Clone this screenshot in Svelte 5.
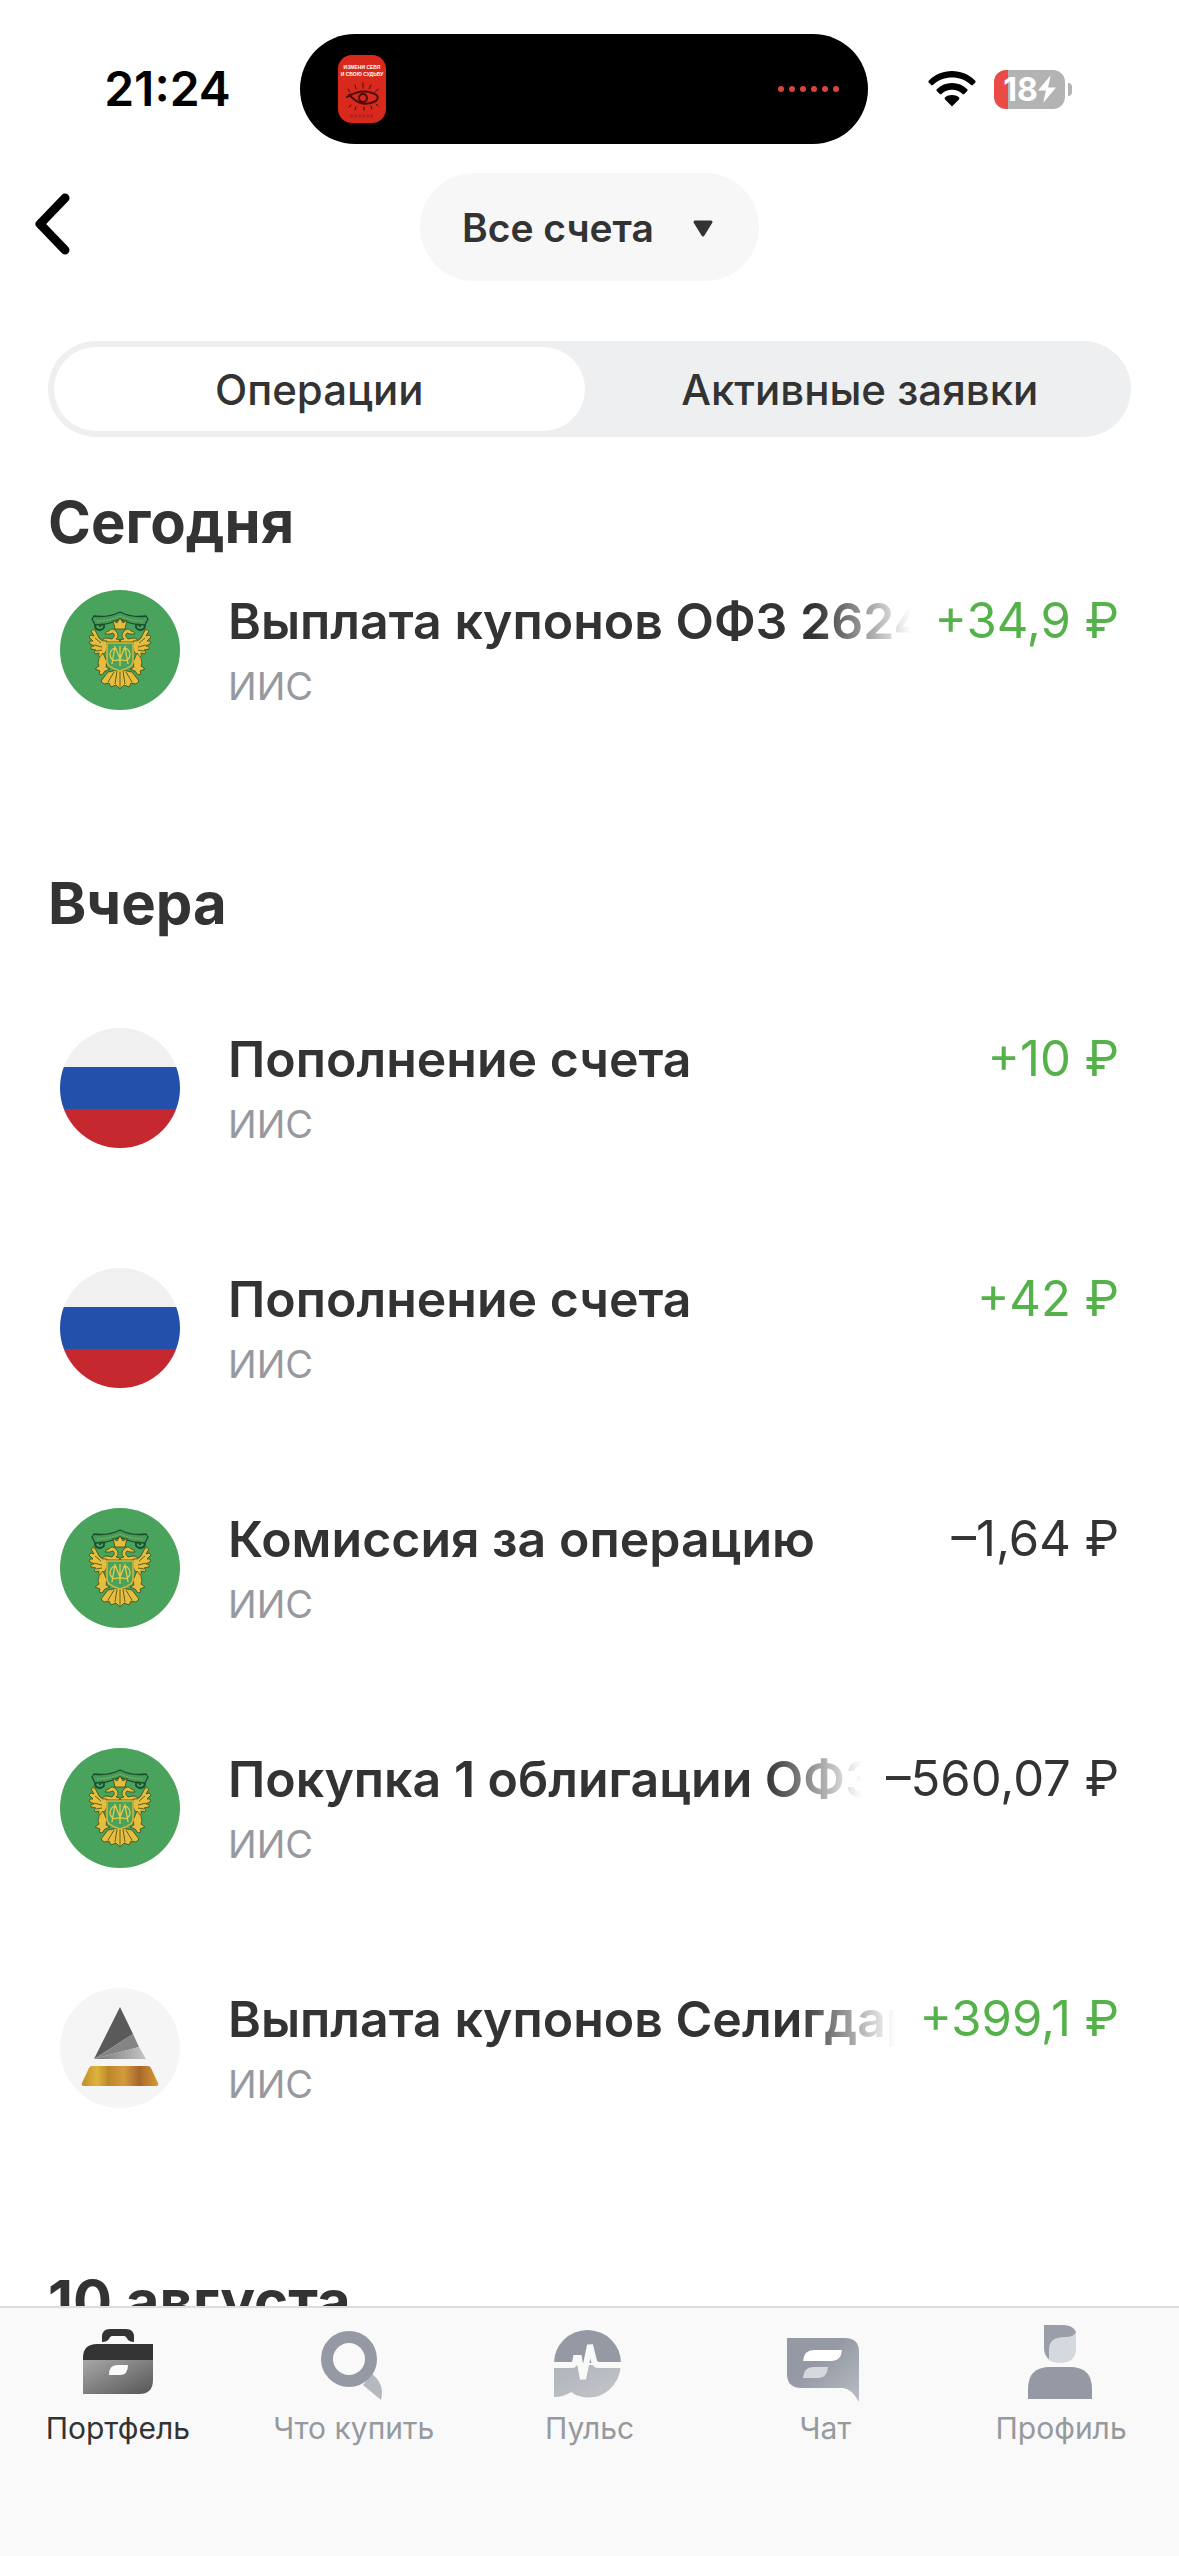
<script>
  let account = "Все счета";
  let tab = "operations";

  const tabs = [
    { id: "operations", name: "Операции" },
    { id: "orders", name: "Активные заявки" },
  ];

  const days = [
    {
      name: "Сегодня",
      items: [
        { icon: "ofz", title: "Выплата купонов ОФЗ 2624", sum: "+34,9 ₽", income: true },
      ],
    },
    {
      name: "Вчера",
      items: [
        { icon: "rub", title: "Пополнение счета", sum: "+10 ₽", income: true },
        { icon: "rub", title: "Пополнение счета", sum: "+42 ₽", income: true },
        { icon: "ofz", title: "Комиссия за операцию", sum: "–1,64 ₽" },
        { icon: "ofz", title: "Покупка 1 облигации ОФЗ", sum: "–560,07 ₽" },
        { icon: "seligdar", title: "Выплата купонов Селигдар", sum: "+399,1 ₽", income: true },
      ],
    },
    { name: "10 августа", items: [] },
  ];

  const menu = [
    { id: "portfolio", name: "Портфель" },
    { id: "search", name: "Что купить" },
    { id: "pulse", name: "Пульс" },
    { id: "chat", name: "Чат" },
    { id: "profile", name: "Профиль" },
  ];
</script>

<div class="screen">
  <div class="status">
    <div class="time">21:24</div>
    <div class="island">
      <svg width="48" height="68" viewBox="0 0 48 68">
        <rect width="48" height="68" rx="14" fill="#d9281c" />
        <text x="24" y="14" class="cover">ИЗМЕНИ СЕБЯ</text>
        <text x="24" y="21" class="cover">И СВОЮ СУДЬБУ</text>
        <g fill="none" stroke="#4a0d0b" stroke-width="2" stroke-linecap="round">
          <path d="M9 42 Q24 33 37 39 Q42 42 38 46 Q26 52 17 45 L11 40" />
          <circle cx="25" cy="43" r="4" />
          <path d="M10 34l2 3M17 30l1 4M25 28v5M33 30l-2 4M40 34l-3 3M13 50l-2 2M18 52l-1 3M26 52v3M33 51l1 3M38 49l2 2" stroke-width="1" />
        </g>
        <path d="M12 61h24" stroke="#b8211a" stroke-width="3" stroke-dasharray="3 1" />
      </svg>
      <div class="dots"><i></i><i></i><i></i><i></i><i></i><i></i></div>
    </div>
    <div class="signals">
      <svg width="48" height="36" viewBox="0 0 48 36">
        <path d="M24 0C33 0 41 3.500 47 9.500c.8.800.8 1.500 0 2.200l-2 2c-.7.700-1.500.7-2.200 0C37.500 9 31 6.500 24 6.500S10.500 9 5.200 13.700c-.7.700-1.500.7-2.200 0l-2-2c-.8-.7-.8-1.400 0-2.200C7 3.500 15 0 24 0z" />
        <path d="M24 12c6 0 11 2.300 15 6 .8.700.8 1.400 0 2.200l-2.500 2.500c-.7.700-1.500.7-2.200 0C31.500 20.200 28 18.800 24 18.800s-7.500 1.400-10.300 3.900c-.7.700-1.500.7-2.200 0L9 20.200c-.8-.8-.8-1.500 0-2.200 4-3.700 9-6 15-6z" />
        <path d="M24 24c2.800 0 5 .9 6.800 2.300.8.700.8 1.400.1 2.100L24 35.500l-6.900-7.100c-.7-.7-.7-1.400.1-2.100C19 24.900 21.200 24 24 24z" />
      </svg>
      <div class="battery">
        <span>18</span>
        <svg width="18" height="28" viewBox="0 0 17 26">
          <path d="M12 0 0 14.500h7.500L5 26 17 11.500H9.500z" fill="#fff" />
        </svg>
      </div>
    </div>
  </div>

  <header class="top">
    <button class="back" aria-label="Назад">
      <svg width="36" height="62" viewBox="0 0 36 62">
        <path d="M31 5 6 31l25 26" fill="none" stroke="#000" stroke-width="9" stroke-linecap="round" stroke-linejoin="round" />
      </svg>
    </button>
    <div class="account">
      <select bind:value={account} aria-label="Счет">
        <option>Все счета</option>
      </select>
      <svg width="22" height="18" viewBox="0 0 22 18">
        <path d="M3 2h16l-8 13z" fill="#333" stroke="#333" stroke-width="3" stroke-linejoin="round" />
      </svg>
    </div>
  </header>

  <div class="tabs" role="tablist">
    {#each tabs as t}
      <button
        role="tab"
        aria-selected={tab === t.id}
        class:active={tab === t.id}
        on:click={() => (tab = t.id)}>{t.name}</button
      >
    {/each}
  </div>

  <main>
    {#each days as day, i}
      <section>
        <h2 class:first={i === 0}>{day.name}</h2>
        <ul>
          {#each day.items as item}
            <li>
              <svg class="logo" width="120" height="120" viewBox="0 0 120 120">
                {#if item.icon === "ofz"}
                  <circle cx="60" cy="60" r="60" fill="#4aa35c" />
                  <g stroke="#3a4a1a" stroke-width=".8" stroke-linejoin="round">
                    <!-- ribbon -->
                    <path d="M34 26q14 2 26-4 12 6 26 4l2 3-3 6q-14 0-25-6-11 6-25 6l-3-6z" fill="#45995a" stroke="#174d2c" stroke-width="1.300" />
                    <path d="M35 35q0 5 5 5 5-1 4-5-4-2-4 2M85 35q0 5-5 5-5-1-4-5 4-2 4 2" fill="none" stroke="#174d2c" stroke-width="1.800" />
                    <path d="M37 31q12 0 23-5 11 5 23 5" fill="none" stroke="#9fbf55" stroke-dasharray="2 1" />
                    <g fill="#e6bd3c">
                      <!-- crown and heads -->
                      <path d="M55 39l-2-9 4 3 3-5 3 5 4-3-2 9z" />
                      <path d="M60 52H42q0-4 5-4l5 1q4-3 1-6l-3 1-5 0q1-3 4-3 3-4 7 0 4 5 0 8l4 1zM60 52h18q0-4-5-4l-5 1q-4-3-1-6l3 1 5 0q-1-3-4-3-3-4-7 0-4 5 0 8l-4 1z" />
                      <!-- wings -->
                      <path d="M47 51q-5 1-8-3l-4-8q-3-1-4 1l3 5q-4-2-5 1l4 4q-4-1-4 2l5 3q-4 0-3 3l5 1q-3 2-1 4l4-1q-1 3 1 4 6-3 7-9z" />
                      <path d="M73 51q5 1 8-3l4-8q3-1 4 1l-3 5q4-2 5 1l-4 4q4-1 4 2l-5 3q4 0 3 3l-5 1q3 2 1 4l-4-1q1 3-1 4-6-3-7-9z" />
                      <!-- paws -->
                      <path d="M43 63l4 9-1 5 4 2-5 2-3 4-3-1 1-3-5-2 4-3-1-3q0-6 5-10zM77 63l-4 9 1 5-4 2 5 2 3 4 3-1-1-3 5-2-4-3 1-3q0-6-5-10z" />
                      <!-- tail -->
                      <path d="M58 80l-10 2-7 9 3 3 5-1 2 4 5-2 4 4 4-4 5 2 2-4 5 1 3-3-7-9-10-2z" />
                    </g>
                    <path d="M60 81v17M57 81l-2 13M63 81l2 13M54 82l-6 10M66 82l6 10M35 48l6 5M34 55l8 2M36 61l6-1M85 48l-6 5M86 55l-8 2M84 61l-6-1" fill="none" />
                    <path d="M47 53h26v19q0 5-13 9-13-4-13-9z" fill="#4aa35c" stroke="#d9b53a" stroke-width="1.500" />
                  </g>
                  <path d="M52 74l3-17 5 12 5-12 3 17M60 56v20M57 59a5 6 0 1 0 0 11h6a5 6 0 1 0 0-11" fill="none" stroke="#e5c94b" stroke-width="1.300" />
                {:else if item.icon === "rub"}
                  <clipPath id="round"><circle cx="60" cy="60" r="60" /></clipPath>
                  <g clip-path="url(#round)">
                    <path d="M0 0h120v40H0z" fill="#f0f0f0" />
                    <path d="M0 39h120v42H0z" fill="#2350ab" />
                    <path d="M0 81h120v39H0z" fill="#c5282f" />
                  </g>
                {:else}
                  <defs>
                    <linearGradient id="gold">
                      <stop offset="0" stop-color="#bf8d29" />
                      <stop offset=".2" stop-color="#dfb43d" />
                      <stop offset=".35" stop-color="#bd8729" />
                      <stop offset=".55" stop-color="#d39b3d" />
                      <stop offset=".75" stop-color="#a8672b" />
                      <stop offset="1" stop-color="#d99a34" />
                    </linearGradient>
                    <linearGradient id="steel">
                      <stop offset="0" stop-color="#777" />
                      <stop offset="1" stop-color="#c4c4c4" />
                    </linearGradient>
                  </defs>
                  <circle cx="60" cy="60" r="60" fill="#f5f5f5" />
                  <path d="M60 19l13 27-39 25z" fill="#5b5a5b" />
                  <path d="M73 46l6 13-45 12z" fill="#858485" />
                  <path d="M79 59l7 12H34z" fill="url(#steel)" />
                  <path d="M32 78h56q2 0 3 2l7 15q1 3-2 3H24q-3 0-2-3l7-15q1-2 3-2z" fill="url(#gold)" />
                {/if}
              </svg>
              <div class="info">
                <div class="line">
                  <span class="title">{item.title}</span>
                  <span class="sum" class:income={item.income}>{item.sum}</span>
                </div>
                <div class="sub">ИИС</div>
              </div>
            </li>
          {/each}
        </ul>
      </section>
    {/each}
  </main>

  <nav>
    {#each menu as m, i}
      <a href="#{m.id}" class:active={i === 0}>
        <svg width="80" height="80" viewBox="0 0 80 80">
          {#if m.id === "portfolio"}
            <defs>
              <linearGradient id="bag" x1="0" y1="0" x2="1" y2="1">
                <stop offset="0" stop-color="#a8a8a8" />
                <stop offset="1" stop-color="#555" />
              </linearGradient>
            </defs>
            <path d="M24 20v-5q0-8 8-8h16q8 0 8 8v5q-4 0-6-2-2-4-4-4H34q-2 0-3 3-2 3-7 3z" fill="#333" />
            <path d="M5 38v-2q0-14 14-14h56v16z" fill="#333" />
            <path d="M5 38h70v20q0 14-14 14H5zM31 53h11q8 0 8-10H39q-8 0-8 10z" fill="url(#bag)" fill-rule="evenodd" />
          {:else if m.id === "search"}
            <path d="M49 63l9-11q13 10 9 26z" fill="#b4b8bf" />
            <circle cx="35" cy="37" r="22" fill="none" stroke="#9499a4" stroke-width="12" />
          {:else if m.id === "pulse"}
            <defs>
              <linearGradient id="low" x1="0" y1="0" x2="1" y2="1">
                <stop offset="0" stop-color="#b0b4bb" />
                <stop offset="1" stop-color="#c2c5ca" />
              </linearGradient>
            </defs>
            <path d="M5 41a33.500 33 0 0 1 67 0z" fill="#9499a4" />
            <path d="M5 43h67q-1 15-12 25-13 11-30 6-4-1-8-4-7 5-17 5z" fill="url(#low)" />
            <path d="M4 43h19q3 0 4-7h3l4 21 7-34 4 16q1 4 5 4h24" fill="none" stroke="#f9f9f9" stroke-width="6" />
          {:else if m.id === "chat"}
            <defs>
              <linearGradient id="bubble" x1="0" y1="0" x2="1" y2="1">
                <stop offset=".4" stop-color="#9499a4" />
                <stop offset="1" stop-color="#b9bdc3" />
              </linearGradient>
            </defs>
            <path d="M2 16h58q14 0 14 14v50q-8-14-16-14H17Q2 66 2 52z" fill="url(#bubble)" />
            <path d="M18 39q1-11 11-11h28q-1 11-10 11z" fill="#fff" />
            <path d="M18 56q1-11 10-11h15q-1 11-9 11z" fill="#d5d9de" />
          {:else}
            <path d="M23 3h18q14 0 14 10v13q0 15-16 15-16 0-16-15z" fill="#d5d8dc" />
            <path d="M23 3h18q11 0 14 7-2 5-10 5-9 0-13 3-4 3-4 10v9q-5-4-5-12z" fill="#9a9ea8" />
            <path d="M7 77V67q0-22 22-22h20q22 0 22 22v10z" fill="#9499a4" />
          {/if}
        </svg>
        <span>{m.name}</span>
      </a>
    {/each}
  </nav>
</div>

<style>
  :global(body) {
    margin: 0;
    background: #fff;
  }
  .screen {
    display: flex;
    flex-direction: column;
    height: 100vh;
    overflow: hidden;
    font-family: Inter, "Noto Sans", sans-serif;
    color: #333;
  }
  button,
  select {
    font: inherit;
    color: inherit;
    border: none;
    background: none;
    padding: 0;
    margin: 0;
  }
  .status {
    display: grid;
    grid-template-columns: 1fr 568px 1fr;
    align-items: center;
    padding: 34px 11px 0 0;
    flex-shrink: 0;
  }
  .time {
    padding-left: 35px;
    font-size: 48px;
    line-height: 60px;
    font-weight: 600;
    color: #000;
    text-align: center;
  }
  .island {
    display: flex;
    align-items: center;
    justify-content: space-between;
    box-sizing: border-box;
    height: 110px;
    padding: 0 29px 0 38px;
    border-radius: 55px;
    background: #000;
  }
  .cover {
    font-family: "Liberation Sans Narrow", "Liberation Sans", sans-serif;
    font-size: 5px;
    font-weight: 700;
    fill: #fff;
    text-anchor: middle;
  }
  .dots {
    display: flex;
    gap: 5px;
  }
  .dots i {
    width: 6px;
    height: 6px;
    border-radius: 3px;
    background: #d9453b;
  }
  .signals {
    display: flex;
    align-items: center;
    gap: 18px;
    padding-left: 60px;
  }
  .battery {
    position: relative;
    display: flex;
    align-items: center;
    justify-content: center;
    width: 71px;
    height: 39px;
    border-radius: 12px;
    background: linear-gradient(90deg, #eb4b47 14px, #b3b3b3 14px);
    color: #fff;
    font-size: 32px;
    line-height: 39px;
    font-weight: 700;
  }
  .battery::after {
    content: "";
    position: absolute;
    right: -7px;
    top: 13px;
    width: 4px;
    height: 13px;
    border-radius: 0 6px 6px 0;
    background: #b3b3b3;
  }
  .top {
    display: grid;
    grid-template-columns: 1fr auto 1fr;
    align-items: center;
    padding: 29px 34px 0;
    flex-shrink: 0;
  }
  .back {
    justify-self: start;
    display: flex;
    padding-bottom: 6px;
  }
  .account {
    position: relative;
    display: flex;
    align-items: center;
    border-radius: 54px;
    background: #f7f7f7;
  }
  .account select {
    appearance: none;
    box-sizing: border-box;
    width: 339px;
    height: 108px;
    padding: 0 90px 0 42px;
    font-size: 39px;
    font-weight: 600;
  }
  .account svg {
    position: absolute;
    right: 45px;
    top: 47px;
    pointer-events: none;
  }
  .tabs {
    display: flex;
    gap: 10px;
    margin: 60px 48px 0;
    padding: 6px;
    border-radius: 48px;
    background: #edeff0;
    flex-shrink: 0;
  }
  .tabs button {
    flex: 1;
    height: 84px;
    border-radius: 42px;
    font-size: 42px;
    font-weight: 500;
  }
  .tabs .active {
    background: #fff;
  }
  main {
    flex: 1;
    min-height: 0;
    overflow: hidden auto;
    scrollbar-width: none;
    padding: 50px 60px 0 48px;
  }
  h2 {
    margin: 0 0 90px;
    font-size: 58px;
    line-height: 70px;
    font-weight: 700;
  }
  h2.first {
    margin-bottom: 33px;
  }
  ul {
    margin: 0;
    padding: 0;
    list-style: none;
  }
  li {
    display: flex;
    gap: 48px;
    height: 120px;
    padding: 0 0 120px 12px;
  }
  li:last-child {
    padding-bottom: 158px;
  }
  .logo {
    flex-shrink: 0;
  }
  .info {
    flex: 1;
    min-width: 0;
  }
  .line {
    display: flex;
    gap: 24px;
    font-size: 50px;
    line-height: 62px;
  }
  .title {
    flex: 1;
    min-width: 0;
    overflow: hidden;
    white-space: nowrap;
    font-weight: 600;
    mask-image: linear-gradient(90deg, #000 calc(100% - 96px), transparent);
  }
  .sum {
    font-size: 49px;
    white-space: nowrap;
  }
  .income {
    color: #55b24a;
  }
  .sub {
    font-size: 38px;
    line-height: 68px;
    color: #9799a0;
  }
  nav {
    display: flex;
    height: 234px;
    padding-top: 14px;
    border-top: 2px solid #dcdddf;
    background: #f9f9f9;
    flex-shrink: 0;
  }
  nav a {
    flex: 1;
    display: flex;
    flex-direction: column;
    align-items: center;
    gap: 8px;
    color: #96999e;
    font-size: 30px;
    line-height: 36px;
    text-decoration: none;
  }
  nav a.active {
    color: #333;
  }
</style>
